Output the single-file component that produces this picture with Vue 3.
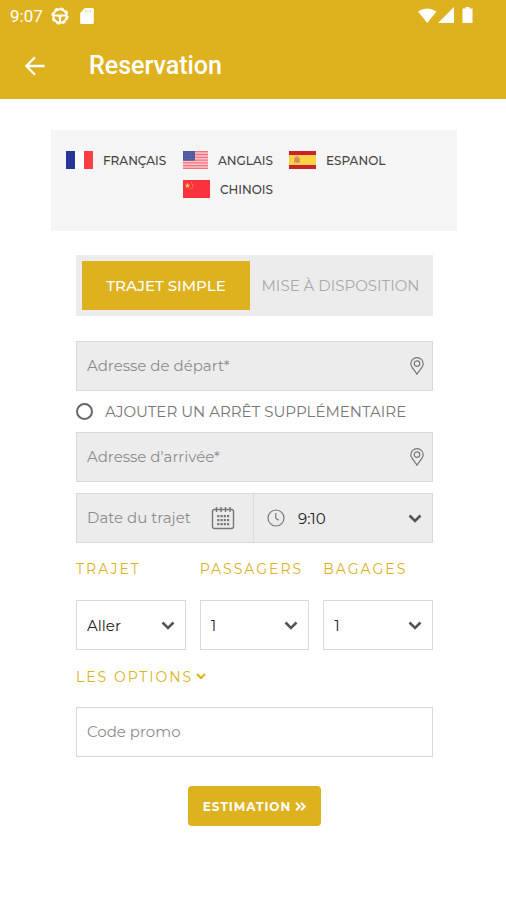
<script setup>
import { ref } from 'vue'

const tripType = ref('simple')
const departure = ref('')
const arrival = ref('')
const extraStop = ref(false)
const date = ref('')
const time = ref('9:10')
const promo = ref('')

const languages = [
  { code: 'fr', label: 'FRANÇAIS' },
  { code: 'us', label: 'ANGLAIS' },
  { code: 'es', label: 'ESPANOL' },
  { code: 'cn', label: 'CHINOIS' }
]

const choices = ref([
  { id: 'trajet', label: 'TRAJET', value: 'Aller', options: ['Aller', 'Retour'] },
  { id: 'passagers', label: 'PASSAGERS', value: '1', options: ['1', '2', '3', '4'] },
  { id: 'bagages', label: 'BAGAGES', value: '1', options: ['1', '2', '3', '4'] }
])
</script>

<template>
  <header class="app-header">
    <div class="status">
      <span class="clock">9:07</span>
      <svg class="wheel" viewBox="0 0 18 18" aria-hidden="true">
        <circle cx="9" cy="9" r="6.800" fill="none" stroke="#fff" stroke-width="2" />
        <circle cx="9" cy="9" r="8" fill="none" stroke="#fff" stroke-width="1.200" stroke-dasharray="3.600 2.680" />
        <path d="M2.500 8.500h13M9 9v6" fill="none" stroke="#fff" stroke-width="2" />
        <path d="M6.500 9h5L9 12z" fill="#fff" />
      </svg>
      <svg class="card" viewBox="0 0 14 16" aria-hidden="true">
        <path d="M5 0h7.500a1.300 1.300 0 0 1 1.300 1.300v13.400a1.300 1.300 0 0 1-1.300 1.300H1.500A1.300 1.300 0 0 1 .2 14.700V5z" fill="#fff" />
        <path d="M5.500 2v2.500M8 2v2.500M10.500 2v2.500" stroke="#f0d88c" stroke-width="1" />
      </svg>
      <svg class="signals" viewBox="0 0 56 18" aria-hidden="true">
        <path d="M0 4.500Q9.200-1.500 18.500 4.500L9.200 16z" fill="#fff" />
        <path d="M36 0v16H20z" fill="#fff" />
        <path d="M47.500 0h4v1.500h3V16H44.500V1.500h3z" fill="#fff" />
      </svg>
    </div>
    <div class="title-bar">
      <button class="back" type="button" aria-label="Retour">
        <svg viewBox="0 0 20 20" aria-hidden="true">
          <path d="M19.500 10H1.500M10 1.200L1.300 10l8.700 8.800" fill="none" stroke="#fff" stroke-width="2.300" />
        </svg>
      </button>
      <h1>Reservation</h1>
    </div>
  </header>

  <main>
    <nav class="languages">
      <a v-for="lang in languages" :key="lang.code" href="#" :class="['language', lang.code]">
        <svg v-if="lang.code === 'fr'" viewBox="0 0 27 18" aria-hidden="true">
          <path d="M0 0h27v18H0z" fill="#fff" />
          <path d="M0 0h9v18H0z" fill="#26359a" />
          <path d="M18 0h9v18h-9z" fill="#f93f46" />
        </svg>
        <svg v-else-if="lang.code === 'us'" viewBox="0 0 25 18" aria-hidden="true">
          <path d="M0 0h25v18H0z" fill="#f9c6ca" />
          <path d="M0 .7h25M0 3.500h25M0 6.300h25M0 9.100h25M0 11.900h25M0 14.700h25M0 17.400h25" stroke="#f4727c" stroke-width="1.300" />
          <path d="M0 0h12v9.700H0z" fill="#5359a0" />
          <path d="M1.500 2h10M1.500 4.800h10M1.500 7.600h10" stroke="#7479b2" stroke-width=".8" stroke-dasharray="1 1.200" />
        </svg>
        <svg v-else-if="lang.code === 'es'" viewBox="0 0 27 18" aria-hidden="true">
          <path d="M0 0h27v18H0z" fill="#c9222b" />
          <path d="M0 4h27v10H0z" fill="#fdd344" />
          <path d="M6 6.500h4v4.500q-2 2-4 0z" fill="#dd8458" />
          <path d="M5.500 7v5M10.500 7v5M6.500 5.500h3" stroke="#dc9a6a" stroke-width="1" />
        </svg>
        <svg v-else viewBox="0 0 27 18" aria-hidden="true">
          <path d="M0 0h27v18H0z" fill="#f8323f" />
          <path d="M4.500 2.800l.8 1.900 2 .1-1.600 1.300.6 2-1.800-1.100-1.800 1.100.6-2-1.600-1.300 2-.1z" fill="#fdc940" />
          <path d="M8 2.500l1 .5M9.700 4.200v1.200M9.600 6.500l-.3 1M8.300 8.500l-.9.500" stroke="#fdb040" stroke-width="1" />
        </svg>
        <span>{{ lang.label }}</span>
      </a>
    </nav>

    <form class="booking" @submit.prevent>
      <div class="tabs">
        <button type="button" :class="{ active: tripType === 'simple' }" @click="tripType = 'simple'">TRAJET SIMPLE</button>
        <button type="button" :class="{ active: tripType === 'hire' }" @click="tripType = 'hire'">MISE À DISPOSITION</button>
      </div>

      <div class="field shaded">
        <input v-model="departure" type="text" placeholder="Adresse de départ*" aria-label="Adresse de départ" />
        <svg class="pin" viewBox="0 0 14 18" aria-hidden="true">
          <path d="M7 17.200C5 13.400.8 10.300.8 6.800a6.200 6.200 0 0 1 12.400 0C13.200 10.300 9 13.400 7 17.200z" />
          <circle cx="7" cy="6.600" r="2.800" />
        </svg>
      </div>

      <label class="stop">
        <input v-model="extraStop" type="radio" :value="true" name="stop" />
        <span>AJOUTER UN ARRÊT SUPPLÉMENTAIRE</span>
      </label>

      <div class="field shaded">
        <input v-model="arrival" type="text" placeholder="Adresse d'arrivée*" aria-label="Adresse d'arrivée" />
        <svg class="pin" viewBox="0 0 14 18" aria-hidden="true">
          <path d="M7 17.200C5 13.400.8 10.300.8 6.800a6.200 6.200 0 0 1 12.400 0C13.200 10.300 9 13.400 7 17.200z" />
          <circle cx="7" cy="6.600" r="2.800" />
        </svg>
      </div>

      <div class="field shaded schedule">
        <div class="half">
          <input v-model="date" type="text" placeholder="Date du trajet" aria-label="Date du trajet" />
          <svg class="calendar" viewBox="0 0 24 24" aria-hidden="true">
            <rect x="1.500" y="3.500" width="21" height="19" rx="2" fill="none" stroke="#777" stroke-width="1.400" />
            <path d="M5.500 1v5M10 1v5M14.500 1v5M19 1v5" stroke="#777" stroke-width="1.400" />
            <path d="M6.200 10.200h12M6.200 14.200h12M6.200 18.200h12" stroke="#777" stroke-width="2.200" stroke-dasharray="2.200 1.070" />
          </svg>
        </div>
        <div class="half">
          <svg class="time-icon" viewBox="0 0 18 18" aria-hidden="true">
            <circle cx="9" cy="9" r="8" />
            <path d="M8.800 4v5.200l3 2" />
          </svg>
          <select v-model="time" aria-label="Heure">
            <option>9:10</option>
            <option>9:20</option>
            <option>9:30</option>
          </select>
          <svg class="chevron" viewBox="0 0 14 9" aria-hidden="true"><path d="M1.500 1.500L7 7l5.500-5.500" /></svg>
        </div>
      </div>

      <div class="choices">
        <div v-for="choice in choices" :key="choice.id" class="choice">
          <label :for="choice.id">{{ choice.label }}</label>
          <div class="field">
            <select :id="choice.id" v-model="choice.value">
              <option v-for="option in choice.options" :key="option">{{ option }}</option>
            </select>
            <svg class="chevron" viewBox="0 0 14 9" aria-hidden="true"><path d="M1.500 1.500L7 7l5.500-5.500" /></svg>
          </div>
        </div>
      </div>

      <button class="options" type="button">
        LES OPTIONS
        <svg viewBox="0 0 10 7" aria-hidden="true"><path d="M1 1l4 4 4-4" fill="none" stroke="#deb11f" stroke-width="2.200" /></svg>
      </button>

      <div class="field">
        <input v-model="promo" type="text" placeholder="Code promo" aria-label="Code promo" />
      </div>

      <button class="submit" type="submit">
        ESTIMATION
        <svg viewBox="0 0 11 9" aria-hidden="true"><path d="M1 .8l3.700 3.700L1 8.200M6 .8l3.700 3.700L6 8.200" fill="none" stroke="#fff" stroke-width="2.100" /></svg>
      </button>
    </form>
  </main>
</template>

<style>
body {
  background: #fff;
}
</style>

<style scoped>
* {
  box-sizing: border-box;
}

main,
button,
input,
select {
  font-family: Montserrat, Inter, sans-serif;
}

button,
input,
select {
  margin: 0;
  padding: 0;
  border: 0;
  background: none;
  appearance: none;
}

svg {
  display: block;
  flex: none;
}

.app-header {
  background: #deb11f;
  color: #fff;
  font-family: Roboto, sans-serif;
}

.status {
  display: flex;
  align-items: center;
  height: 32px;
  padding: 0 32px 0 10px;
}

.clock {
  font-size: 17px;
  line-height: 32px;
}

.wheel {
  width: 18px;
  height: 18px;
  margin-left: 8px;
}

.card {
  width: 14px;
  height: 16px;
  margin-left: 11px;
}

.signals {
  width: 56px;
  height: 18px;
  margin-left: auto;
}

.title-bar {
  display: flex;
  align-items: center;
  gap: 44px;
  height: 67px;
  padding: 0 25px;
}

.back svg {
  width: 20px;
  height: 20px;
}

h1 {
  margin: 0;
  font-size: 25px;
  font-weight: 500;
  line-height: 32px;
}

main {
  padding: 31px 49px 32px 51px;
}

.languages {
  display: grid;
  grid-template-columns: 117px 106px auto;
  align-content: start;
  row-gap: 11px;
  min-height: 101px;
  padding: 21px 15px;
  background: #f5f5f5;
}

.language {
  display: flex;
  align-items: center;
  gap: 10px;
  height: 18px;
  color: #444;
  font-size: 12px;
  font-weight: 500;
  text-decoration: none;
}

.language svg {
  width: 27px;
  height: 18px;
}

.language.us svg {
  width: 25px;
}

.language.cn {
  grid-column: 2;
}

.booking {
  display: flex;
  flex-direction: column;
  padding: 24px 24px 0 25px;
}

.tabs {
  display: grid;
  grid-template-columns: 168fr 181fr;
  height: 61px;
  margin-bottom: 25px;
  padding: 6px 2px 6px 6px;
  background: #ececec;
}

.tabs button {
  color: #aaa;
  font-size: 15px;
  white-space: nowrap;
}

.tabs .active {
  background: #deb11f;
  color: #fff;
  font-weight: 500;
}

.field {
  display: flex;
  align-items: center;
  position: relative;
  height: 50px;
  border: 1px solid #d9d9d9;
  background: #fff;
}

.shaded {
  background: #ececec;
}

.field input {
  flex: 1;
  min-width: 0;
  height: 100%;
  padding: 0 0 2px 10px;
  color: #333;
  font-size: 15px;
}

.field input::placeholder {
  color: #8c8c8c;
  opacity: 1;
}

.field select {
  flex: 1;
  min-width: 0;
  height: 100%;
  padding-left: 10px;
  color: #222;
  font-size: 15px;
}

.pin {
  width: 14px;
  height: 18px;
  margin-right: 8px;
}

.pin path,
.pin circle,
.time-icon circle,
.time-icon path {
  fill: none;
  stroke: #777;
  stroke-width: 1.2;
}

.stop {
  display: flex;
  align-items: center;
  gap: 12px;
  height: 41px;
  color: #777;
  font-size: 15px;
  white-space: nowrap;
}

.stop input {
  flex: none;
  width: 17px;
  height: 17px;
  border: 2px solid #666;
  border-radius: 50%;
}

.stop input:checked {
  background: #deb11f;
}

.schedule {
  display: grid;
  grid-template-columns: 176fr 179fr;
  margin-top: 11px;
}

.half {
  display: flex;
  align-items: center;
  position: relative;
  min-width: 0;
  height: 100%;
}

.half + .half {
  border-left: 1px solid #dcdcdc;
}

.calendar {
  width: 24px;
  height: 24px;
  margin-right: 18px;
}

.time-icon {
  width: 18px;
  height: 18px;
  margin-left: 13px;
}

.half select {
  padding-left: 13px;
}

.chevron {
  position: absolute;
  right: 10px;
  width: 14px;
  height: 9px;
  pointer-events: none;
}

.chevron path {
  fill: none;
  stroke: #555;
  stroke-width: 2.6;
}

.choices {
  display: grid;
  grid-template-columns: repeat(3, 1fr);
  gap: 14px;
}

.choice label {
  display: block;
  padding: 16px 0 21px;
  color: #deb11f;
  font-size: 14px;
  line-height: 20px;
  letter-spacing: 2px;
}

.options {
  display: flex;
  align-items: center;
  align-self: flex-start;
  gap: 3px;
  height: 53px;
  margin-bottom: 4px;
  color: #deb11f;
  font-size: 14px;
  letter-spacing: 2px;
}

.options svg {
  width: 10px;
  height: 7px;
}

.submit {
  display: flex;
  align-items: center;
  align-self: center;
  gap: 4px;
  height: 40px;
  margin-top: 29px;
  padding: 0 15px;
  border-radius: 4px;
  background: #deb11f;
  color: #fff;
  font-size: 12px;
  font-weight: 700;
  letter-spacing: 1px;
}

.submit svg {
  width: 11px;
  height: 9px;
}
</style>
